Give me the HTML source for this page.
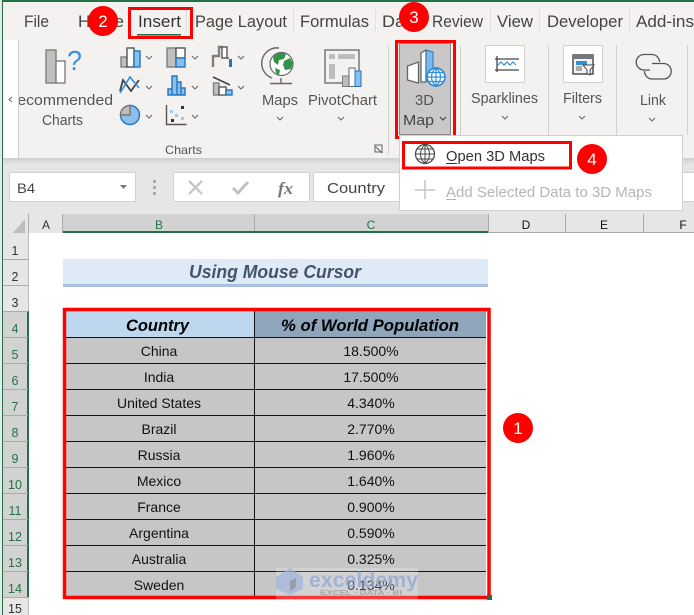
<!DOCTYPE html>
<html><head><meta charset="utf-8"><style>
html,body{margin:0;padding:0;background:#fff}
svg{display:block}
text{font-family:"Liberation Sans",sans-serif}
</style></head><body>
<svg width="694" height="615" viewBox="0 0 694 615" xmlns="http://www.w3.org/2000/svg">
<defs><linearGradient id="sh" x1="0" y1="0" x2="0" y2="1"><stop offset="0" stop-color="#cfcfcf"/><stop offset="1" stop-color="#e6e6e6"/></linearGradient></defs>
<rect width="694" height="615" fill="#fff"/>
<!-- chrome -->
<rect width="694" height="165" fill="#f3f2f1"/>
<rect width="694" height="2" fill="#217346"/>
<rect y="158" width="694" height="7" fill="url(#sh)"/>
<rect y="165" width="694" height="50" fill="#e6e6e6"/>
<rect x="0" width="2" height="615" fill="#e8e8e8"/>
<rect x="2" width="1" height="615" fill="#217346"/>
<!-- tabs -->
<g font-size="16.5" fill="#444">
<text x="24" y="27" textLength="25" lengthAdjust="spacingAndGlyphs">File</text>
<text x="78" y="27" textLength="46" lengthAdjust="spacingAndGlyphs">Home</text>
<text x="138" y="27" textLength="43" lengthAdjust="spacingAndGlyphs" fill="#333">Insert</text>
<text x="195" y="27" textLength="92" lengthAdjust="spacingAndGlyphs">Page Layout</text>
<text x="300" y="27" textLength="69" lengthAdjust="spacingAndGlyphs">Formulas</text>
<text x="382" y="27" textLength="38" lengthAdjust="spacingAndGlyphs">Data</text>
<text x="432" y="27" textLength="51" lengthAdjust="spacingAndGlyphs">Review</text>
<text x="497" y="27" textLength="36" lengthAdjust="spacingAndGlyphs">View</text>
<text x="547" y="27" textLength="76" lengthAdjust="spacingAndGlyphs">Developer</text>
<text x="636" y="27" textLength="58" lengthAdjust="spacingAndGlyphs">Add-ins</text>
</g>
<g fill="#e0dfde"><rect x="293" y="8" width="1" height="25"/><rect x="375" y="8" width="1" height="25"/><rect x="490" y="8" width="1" height="25"/><rect x="539" y="8" width="1" height="25"/><rect x="629" y="8" width="1" height="25"/><rect x="186" y="8" width="1" height="25"/></g>
<rect x="137" y="34" width="44" height="1.6" fill="#217346"/>
<!-- ribbon labels -->
<g font-size="14.5" fill="#555">
<text x="6" y="105" textLength="107" lengthAdjust="spacingAndGlyphs">Recommended</text>
<text x="42" y="125" textLength="41" lengthAdjust="spacingAndGlyphs">Charts</text>
<text x="262" y="105" textLength="36" lengthAdjust="spacingAndGlyphs">Maps</text>
<text x="308" y="105" textLength="69" lengthAdjust="spacingAndGlyphs">PivotChart</text>
<text x="471" y="103" textLength="67" lengthAdjust="spacingAndGlyphs">Sparklines</text>
<text x="563" y="103" textLength="39" lengthAdjust="spacingAndGlyphs">Filters</text>
<text x="640" y="105" textLength="26" lengthAdjust="spacingAndGlyphs">Link</text>
</g>
<!-- collapsed scroll -->
<rect x="3" y="40" width="16" height="118" fill="#fff"/>
<rect x="18" y="40" width="1" height="118" fill="#d0d0d0"/>
<path d="M12 97l-3 2.500 3 2.500" fill="none" stroke="#666" stroke-width="1"/>
<!-- Recommended Charts icon -->
<rect x="46" y="50" width="10" height="33" fill="#c0c0bf" stroke="#7f7f7f" stroke-width="1.4"/>
<rect x="56" y="61" width="9" height="22" fill="#fff" stroke="#7f7f7f" stroke-width="1.4"/>
<text x="67" y="70" font-size="28" fill="#3f8fd0" textLength="15" lengthAdjust="spacingAndGlyphs">?</text>
<text x="165" y="154" font-size="12" fill="#555" textLength="37" lengthAdjust="spacingAndGlyphs">Charts</text>
<!-- chart icons -->
<g stroke-width="1.4">
<rect x="121" y="57" width="6" height="10" fill="#c0c0bf" stroke="#7f7f7f"/><rect x="127" y="48" width="7" height="19" fill="#fff" stroke="#555"/><rect x="134" y="51" width="6" height="16" fill="#8cc0ea" stroke="#1f76c0"/>
<rect x="167" y="48" width="9" height="19" fill="#c0c0bf" stroke="#7f7f7f"/><rect x="176" y="48" width="9" height="10" fill="#fff" stroke="#555"/><rect x="176" y="58" width="9" height="9" fill="#8cc0ea" stroke="#1f76c0"/>
<path d="M213 67V56h6V47h4" fill="none" stroke="#7f7f7f" stroke-width="2.400"/><rect x="222" y="47" width="5" height="11" fill="#fff" stroke="#555"/><rect x="229" y="59" width="3" height="8" fill="#1f76c0" stroke="none"/><path d="M227 58h2" stroke="#555"/>
<path d="M120 91l3-11 8 11 8-11" fill="none" stroke="#444" stroke-width="1.800"/><path d="M120 93l10-16 9 11" fill="none" stroke="#2f8fd8" stroke-width="1.600"/>
<path d="M168 95V89h4v6zM172 95V76h5v19zM177 95V82h4v13zM181 95V88h4v7z" fill="#8cc0ea" stroke="#1f76c0"/>
<path d="M213 77l17 8" stroke="#444" stroke-width="1.600"/><rect x="213.500" y="83" width="5.500" height="12" fill="#c0c0bf" stroke="#7f7f7f"/><rect x="219" y="87" width="7" height="8" fill="#fff" stroke="#555"/><rect x="226" y="90" width="6" height="5" fill="#8cc0ea" stroke="#1f76c0"/>
<circle cx="130" cy="115" r="9.500" fill="#8cc0ea" stroke="#1f76c0"/><path d="M130 105.500a9.500 9.500 0 0 0-9.500 9.500h9.500z" fill="#bdbdbd" stroke="#777"/>
<path d="M166.500 105v19.500h20" fill="none" stroke="#555"/>
</g>
<g fill="#333"><rect x="171" y="119" width="3" height="3"/><rect x="181" y="106" width="3" height="3"/></g>
<g fill="#9ccbf0"><rect x="170" y="110" width="3" height="3"/><rect x="175" y="114" width="3" height="3"/><rect x="181" y="117" width="3" height="3"/></g>
<g fill="none" stroke="#666" stroke-width="1.100">
<path d="M146 56l3 3 3-3M192 56l3 3 3-3M238 56l3 3 3-3M146 86l3 3 3-3M192 86l3 3 3-3M238 86l3 3 3-3M146 115l3 3 3-3M192 115l3 3 3-3M277 117l3 3 3-3M338 117l3 3 3-3M502 116l3 3 3-3M579 116l3 3 3-3M649 118l3 3 3-3"/>
</g>
<!-- Maps globe -->
<circle cx="281.500" cy="64" r="11.500" fill="#fff" stroke="#666" stroke-width="1.200"/>
<path d="M273 57c4-4 9-5 13-3l-2 5-5 1-1 5-4-3zM284 61l6-3 3 5-2 6-6 1-2-5zM275 68l5 2-1 5-3-2z" fill="#2f9348"/>
<path d="M279 48a15.500 15.500 0 0 0-7 30M281 78v5M270 83.500h22" fill="none" stroke="#666" stroke-width="1.400"/>
<!-- PivotChart icon -->
<rect x="325" y="50" width="34" height="33" fill="#f3f2f1" stroke="#7f7f7f" stroke-width="1.600"/>
<g fill="#bdbdbd"><rect x="329" y="54" width="6" height="5"/><rect x="338" y="54" width="17" height="5"/><rect x="329" y="64" width="6" height="15"/></g>
<rect x="342.500" y="76" width="6.500" height="10.500" fill="#bdbdbd" stroke="#7f7f7f"/><rect x="349" y="68" width="6" height="18.500" fill="#fff" stroke="#666"/><rect x="355" y="71" width="6" height="15.500" fill="#8cc0ea" stroke="#1f76c0"/>
<!-- group dividers -->
<g fill="#d2d1d0"><rect x="388" y="45" width="1" height="110"/><rect x="460" y="45" width="1" height="90"/><rect x="548" y="45" width="1" height="90"/><rect x="616" y="45" width="1" height="90"/><rect x="687" y="45" width="1" height="90"/></g>
<path d="M374 145h8v8M375 146l7 7M375 146v6h6" fill="none" stroke="#666" stroke-width="1"/>
<!-- 3D Map button -->
<rect x="399.500" y="43.500" width="51" height="91" fill="#c9c8c6" stroke="#8a8a8a"/>
<rect x="396.500" y="41.500" width="58" height="96" fill="none" stroke="#f00" stroke-width="3"/>
<path d="M407.500 66l11-4v21l-11-3z" fill="#fff" stroke="#666" stroke-width="1.300"/>
<path d="M421 53l5-3v32h-5z" fill="#fff" stroke="#666" stroke-width="1.300"/><path d="M426 50l7 2v20l-7 9z" fill="#7fb8e8" stroke="#1f76c0" stroke-width="1"/>
<circle cx="436" cy="77" r="9" fill="#fff" stroke="#2f8fd8" stroke-width="1.700"/>
<path d="M427 77h18M428.500 72.500h15M428.500 81.500h15M436 68v18M436 68c-6 5-6 13 0 18M436 68c6 5 6 13 0 18" fill="none" stroke="#2f8fd8" stroke-width="1.200"/>
<text x="415" y="105" font-size="14.500" fill="#555" textLength="19" lengthAdjust="spacingAndGlyphs">3D</text>
<text x="403" y="125" font-size="14.500" fill="#444" textLength="31" lengthAdjust="spacingAndGlyphs">Map</text>
<path d="M440 117l3 3 3-3" fill="none" stroke="#444" stroke-width="1.200"/>
<!-- Sparklines -->
<rect x="485.500" y="45.500" width="39" height="37" fill="#fff" stroke="#d0d0d0"/>
<path d="M497 56v16M495 59h24M495 70h24" stroke="#444" stroke-width="1.300" fill="none"/>
<path d="M497 66l4-4 3 3 3-3 3 3 3-3 3 3" stroke="#2f8fd8" stroke-width="1.200" fill="none"/>
<!-- Filters -->
<rect x="563.500" y="45.500" width="39" height="37" fill="#fff" stroke="#d0d0d0"/>
<rect x="573" y="55" width="20" height="19" fill="#f3f3f3" stroke="#444" stroke-width="1.400"/>
<rect x="573" y="55" width="20" height="4" fill="#777"/>
<rect x="576" y="61" width="11" height="4" fill="#2f8fd8"/><rect x="576" y="66" width="6" height="5" fill="#aaa"/>
<path d="M583 65h11l-4 5v5l-3-1.500V70z" fill="#fff" stroke="#444" stroke-width="1"/>
<!-- Link -->
<path d="M650 70h-6a7.500 7.500 0 0 1 0-15.500h8a7.500 7.500 0 0 1 7.500 7.500M652 63.500h11.500a7.750 7.750 0 0 1 0 15.500h-11.500a7.750 7.750 0 0 1-7.500-8" fill="none" stroke="#555" stroke-width="1.300"/>
<!-- formula bar -->
<rect x="9.500" y="172.500" width="126" height="29" fill="#fff" stroke="#d2d2d2"/>
<text x="17" y="193" font-size="14" fill="#444" textLength="18" lengthAdjust="spacingAndGlyphs">B4</text>
<path d="M120 185h7l-3.500 4z" fill="#777"/>
<g fill="#aaa"><rect x="153" y="180" width="3" height="3"/><rect x="153" y="186" width="3" height="3"/><rect x="153" y="192" width="3" height="3"/></g>
<rect x="173.500" y="172.500" width="136" height="29" fill="#fff" stroke="#d2d2d2"/>
<path d="M189 181l13 13M202 181l-13 13" stroke="#c2c2c2" stroke-width="2.200"/>
<path d="M233 188l5 5 10-11" fill="none" stroke="#c2c2c2" stroke-width="3"/>
<text x="278" y="194" font-size="17" font-style="italic" font-weight="bold" fill="#777" style="font-family:'Liberation Serif',serif" textLength="15" lengthAdjust="spacingAndGlyphs">fx</text>
<rect x="313.500" y="172.500" width="400" height="29" fill="#fff" stroke="#d2d2d2"/>
<text x="327" y="193" font-size="14.500" fill="#444" textLength="58" lengthAdjust="spacingAndGlyphs">Country</text>
<!-- column headers -->
<rect x="3" y="214" width="691" height="19" fill="#e6e6e6"/>
<path d="M25 219v14H13z" fill="#bdbdbd"/>
<rect x="63" y="214" width="425" height="17" fill="#d2d2d2"/>
<rect x="63" y="231" width="425" height="2" fill="#217346"/>
<rect x="28" y="233" width="1" height="382" fill="#bdbdbd"/>
<g fill="#aaa"><rect x="28" y="214" width="1" height="19"/><rect x="62" y="214" width="1" height="19"/><rect x="254" y="214" width="1" height="17"/><rect x="488" y="214" width="1" height="19"/><rect x="565" y="214" width="1" height="19"/><rect x="643" y="214" width="1" height="19"/></g>
<rect x="488" y="232" width="206" height="1" fill="#aaa"/>
<g font-size="12" text-anchor="middle" fill="#333">
<text x="46" y="229">A</text>
<text x="159" y="229" fill="#217346">B</text>
<text x="371" y="229" fill="#217346">C</text>
<text x="526" y="229" fill="#111">D</text>
<text x="604" y="229" fill="#111">E</text>
<text x="683" y="229" fill="#111">F</text>
</g>
<!-- row headers -->
<rect x="3" y="233" width="25" height="382" fill="#e6e6e6"/>
<rect x="3" y="311" width="25" height="286" fill="#d2d2d2"/>
<rect x="27" y="311" width="2" height="286" fill="#217346"/>
<g fill="#aaa"><rect x="3" y="259" width="25" height="1"/><rect x="3" y="285" width="25" height="1"/><rect x="3" y="311" width="25" height="1"/><rect x="3" y="337" width="25" height="1"/><rect x="3" y="363" width="25" height="1"/><rect x="3" y="389" width="25" height="1"/><rect x="3" y="415" width="25" height="1"/><rect x="3" y="441" width="25" height="1"/><rect x="3" y="467" width="25" height="1"/><rect x="3" y="493" width="25" height="1"/><rect x="3" y="519" width="25" height="1"/><rect x="3" y="545" width="25" height="1"/><rect x="3" y="571" width="25" height="1"/><rect x="3" y="597" width="25" height="1"/></g>
<g font-size="12.500" text-anchor="middle" fill="#333">
<text x="15" y="255">1</text><text x="15" y="281">2</text><text x="15" y="307">3</text>
<g fill="#217346"><text x="15" y="333">4</text><text x="15" y="359">5</text><text x="15" y="385">6</text><text x="15" y="411">7</text><text x="15" y="437">8</text><text x="15" y="463">9</text><text x="15" y="489">10</text><text x="15" y="515">11</text><text x="15" y="541">12</text><text x="15" y="567">13</text><text x="15" y="593">14</text></g>
<text x="15" y="613">15</text>
</g>
<!-- title -->
<rect x="63" y="259" width="425" height="28" fill="#deeaf6"/>
<rect x="63" y="284" width="425" height="3" fill="#a9bfe0"/>
<text x="189" y="278" font-size="18" font-weight="bold" font-style="italic" fill="#44546a" textLength="172" lengthAdjust="spacingAndGlyphs">Using Mouse Cursor</text>
<!-- table -->
<rect x="65" y="311" width="190" height="26" fill="#bdd7ee"/>
<rect x="255" y="311" width="232" height="26" fill="#8ea5bb"/>
<rect x="65" y="337" width="422" height="260" fill="#c6c6c6"/>
<g fill="#111"><rect x="65" y="337" width="422" height="1"/><rect x="65" y="363" width="422" height="1"/><rect x="65" y="389" width="422" height="1"/><rect x="65" y="415" width="422" height="1"/><rect x="65" y="441" width="422" height="1"/><rect x="65" y="467" width="422" height="1"/><rect x="65" y="493" width="422" height="1"/><rect x="65" y="519" width="422" height="1"/><rect x="65" y="545" width="422" height="1"/><rect x="65" y="571" width="422" height="1"/><rect x="254" y="311" width="1" height="286"/></g>
<rect x="486" y="311" width="1" height="286" fill="#fff"/>
<g font-size="16.500" font-weight="bold" font-style="italic" fill="#000">
<text x="126" y="331" textLength="63" lengthAdjust="spacingAndGlyphs">Country</text>
<text x="281" y="331" textLength="178" lengthAdjust="spacingAndGlyphs">% of World Population</text>
</g>
<g font-size="14" fill="#111" text-anchor="middle">
<text x="159" y="356">China</text><text x="371" y="356">18.500%</text>
<text x="159" y="382">India</text><text x="371" y="382">17.500%</text>
<text x="159" y="408">United States</text><text x="371" y="408">4.340%</text>
<text x="159" y="434">Brazil</text><text x="371" y="434">2.770%</text>
<text x="159" y="460">Russia</text><text x="371" y="460">1.960%</text>
<text x="159" y="486">Mexico</text><text x="371" y="486">1.640%</text>
<text x="159" y="512">France</text><text x="371" y="512">0.900%</text>
<text x="159" y="538">Argentina</text><text x="371" y="538">0.590%</text>
<text x="159" y="564">Australia</text><text x="371" y="564">0.325%</text>
<text x="159" y="590">Sweden</text><text x="371" y="590">0.134%</text>
</g>
<!-- red rectangle -->
<rect x="64.500" y="309.500" width="424.500" height="288" fill="none" stroke="#f00" stroke-width="3.500"/>
<rect x="63" y="340" width="1" height="259" fill="#217346"/>
<rect x="487" y="595" width="5" height="5" fill="#217346"/>
<!-- watermark -->
<rect x="276" y="568" width="142" height="31" fill="#fff" opacity=".22"/>
<path d="M276 577l14-9 13 9v12l-13 6-14-6z" fill="#9db4dc" opacity=".7"/>
<path d="M290 581l6-3v9l-6 4z" fill="#888" opacity=".6"/>
<text x="309" y="587" font-size="21" font-weight="bold" fill="#8ca5d6" opacity=".7" textLength="109" lengthAdjust="spacingAndGlyphs">exceldemy</text>
<text x="320" y="595" font-size="7.500" font-weight="bold" fill="#999" opacity=".75" textLength="82" lengthAdjust="spacingAndGlyphs">EXCEL · DATA · BI</text>
<!-- dropdown -->
<rect x="400" y="136" width="283" height="75" fill="#000" opacity=".08"/>
<rect x="399.500" y="135.500" width="283" height="75" fill="#fff" stroke="#d0d0d0"/>
<rect x="403.500" y="142.500" width="167" height="25.500" fill="none" stroke="#f00" stroke-width="3"/>
<circle cx="425" cy="154" r="9.500" fill="none" stroke="#444" stroke-width="1.200"/>
<path d="M415.500 154h19M417 149h16M417 159h16M425 144.500v19M425 144.500c-6 5-6 14 0 19M425 144.500c6 5 6 14 0 19" fill="none" stroke="#444" stroke-width="1"/>
<text x="446" y="161" font-size="14.500" fill="#333" textLength="99" lengthAdjust="spacingAndGlyphs">Open 3D Maps</text>
<rect x="446" y="163" width="11" height="1" fill="#333"/>
<path d="M425 180v19M415 190h20" stroke="#c6c6c6" stroke-width="1.600"/>
<text x="446" y="197" font-size="14.500" fill="#b5b5b5" textLength="206" lengthAdjust="spacingAndGlyphs">Add Selected Data to 3D Maps</text>
<rect x="446" y="199" width="10" height="1" fill="#b5b5b5"/>
<!-- Insert highlight -->
<rect x="129.500" y="8.500" width="62" height="29" fill="none" stroke="#f00" stroke-width="3"/>
<!-- badges -->
<g fill="#f00"><circle cx="103" cy="21" r="15"/><circle cx="414" cy="17" r="15"/><circle cx="592" cy="159" r="15"/><circle cx="518" cy="428" r="15"/></g>
<g fill="#fff" font-size="17" text-anchor="middle"><text x="103" y="27">2</text><text x="414" y="23">3</text><text x="592" y="165">4</text><text x="518" y="434">1</text></g>
</svg>
</body></html>
